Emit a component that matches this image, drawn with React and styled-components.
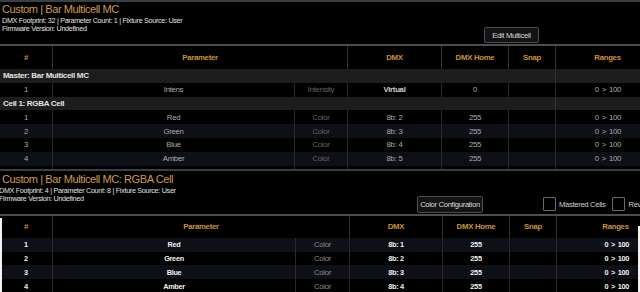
import React from "react";
import styled, { createGlobalStyle } from "styled-components";

const FONT = `"Liberation Sans", Arial, sans-serif`;

const GlobalStyle = createGlobalStyle`
  html, body { margin: 0; padding: 0; background: #000; }
  body { width: 640px; height: 292px; overflow: hidden; font-family: ${FONT}; }
  #root { width: 640px; height: 292px; overflow: hidden; }
`;

const Page = styled.div`
  width: 640px;
  height: 292px;
  overflow: hidden;
  background: #000;
  display: flex;
  flex-direction: column;
`;

const Panel = styled.section`
  position: relative;
  flex: none;
  width: ${(p) => p.$width}px;
  border-top: ${(p) => (p.$topRule ? "2px solid #3a3e46" : "0")};
  border-bottom: ${(p) => (p.$bottomRule ? "2px solid #3a3e46" : "0")};
`;

const Head = styled.header`
  display: flex;
  align-items: flex-end;
  height: ${(p) => p.$height}px;
  padding-top: ${(p) => p.$padTop}px;
  border-bottom: 2px solid #4a4e56;
`;

const InfoBlock = styled.div`
  flex: 0 0 ${(p) => p.$width}px;
  align-self: flex-start;
  padding-left: 2px;
  box-sizing: border-box;
  white-space: nowrap;
`;

const Title = styled.h1`
  margin: 0;
  font-size: 11.1px;
  letter-spacing: -0.45px;
  line-height: 15px;
  font-weight: normal;
  color: #cf9a4c;
`;

const InfoLine = styled.div`
  font-size: 7.2px;
  letter-spacing: -0.3px;
  line-height: 8px;
  color: #e0e0e0;
  margin-left: ${(p) => p.$shift || 0}px;
`;

const Controls = styled.div`
  display: flex;
  align-items: center;
  margin-bottom: 1px;
  white-space: nowrap;
`;

const Button = styled.button`
  box-sizing: border-box;
  width: ${(p) => p.$w}px;
  height: ${(p) => p.$h}px;
  padding: 0;
  background: #131313;
  border: 1px solid #4e4e4e;
  border-radius: 2px;
  color: #dcdcdc;
  font-family: ${FONT};
  font-size: 7.6px;
  letter-spacing: -0.3px;
  display: flex;
  align-items: center;
  justify-content: center;
`;

const Check = styled.span`
  box-sizing: border-box;
  width: 13px;
  height: 14px;
  margin-left: ${(p) => p.$gap}px;
  border: 1px solid #6a6a6a;
  border-radius: 1px;
  background: #000;
  flex: none;
`;

const CheckLabel = styled.span`
  margin-left: 3px;
  font-size: 7.6px;
  letter-spacing: -0.3px;
  color: #cfcfcf;
`;

const Table = styled.div`
  position: relative;
  &::before {
    content: "";
    position: absolute;
    display: ${(p) => (p.$focus ? "block" : "none")};
    left: 0;
    top: 2px;
    bottom: 0;
    width: 2px;
    background: #f2f2f2;
  }
  &::after {
    content: "";
    position: absolute;
    display: ${(p) => (p.$focus ? "block" : "none")};
    left: 638px;
    top: 10px;
    bottom: 0;
    width: 2px;
    background: #f2f2f2;
  }
`;

const Row = styled.div`
  display: grid;
  grid-template-columns: ${(p) => p.$cols};
  height: ${(p) => p.$h}px;
  background: ${(p) => p.$bg || "#000"};
`;

const HeadCell = styled.div`
  display: flex;
  align-items: center;
  justify-content: center;
  border-right: 1px solid #333;
  color: #c99334;
  font-weight: bold;
  font-size: 7.8px;
  letter-spacing: -0.3px;
  white-space: nowrap;
`;

const GroupCell = styled.div`
  display: flex;
  align-items: center;
  padding-left: 3px;
  border-right: 1px solid #303030;
  color: #e4e4e4;
  font-weight: bold;
  font-size: 8px;
  letter-spacing: -0.3px;
  white-space: nowrap;
`;

const Cell = styled.div`
  display: flex;
  align-items: center;
  justify-content: ${(p) => (p.$right ? "flex-end" : "center")};
  padding-right: ${(p) => p.$pr || 0}px;
  border-right: 1px solid #2a2a2a;
  font-size: ${(p) => (p.$strong ? 7.3 : 7.8)}px;
  letter-spacing: -0.3px;
  word-spacing: ${(p) => (p.$right ? 1 : 0)}px;
  font-weight: ${(p) => (p.$bold ? "bold" : "normal")};
  color: ${(p) => p.$color};
  white-space: nowrap;
  overflow: hidden;
`;

const TINT = "#0d1016";

const top = {
  width: 660,
  cols: "53px 242px 53px 94px 67px 47px 104px",
  headCols: "53px 295px 94px 67px 47px 104px",
  rangePad: 38,
};

const lower = {
  width: 675,
  cols: "53px 243px 54px 93px 67px 47px 118px",
  headCols: "53px 297px 93px 67px 47px 118px",
  rangePad: 45,
};

const topGroups = [
  {
    title: "Master: Bar Multicell MC",
    rows: [{ n: 1, name: "Intens", cat: "Intensity", dmx: "Virtual", home: "0", dmxBold: true }],
  },
  {
    title: "Cell 1: RGBA Cell",
    rows: [
      { n: 1, name: "Red", cat: "Color", dmx: "8b: 2", home: "255" },
      { n: 2, name: "Green", cat: "Color", dmx: "8b: 3", home: "255" },
      { n: 3, name: "Blue", cat: "Color", dmx: "8b: 4", home: "255" },
      { n: 4, name: "Amber", cat: "Color", dmx: "8b: 5", home: "255" },
    ],
  },
];

const lowerRows = [
  { n: 1, name: "Red", cat: "Color", dmx: "8b: 1", home: "255" },
  { n: 2, name: "Green", cat: "Color", dmx: "8b: 2", home: "255" },
  { n: 3, name: "Blue", cat: "Color", dmx: "8b: 3", home: "255" },
  { n: 4, name: "Amber", cat: "Color", dmx: "8b: 4", home: "255" },
];

function HeaderRow({ spec, h }) {
  return (
    <Row $cols={spec.headCols} $h={h}>
      <HeadCell>#</HeadCell>
      <HeadCell>Parameter</HeadCell>
      <HeadCell>DMX</HeadCell>
      <HeadCell>DMX Home</HeadCell>
      <HeadCell>Snap</HeadCell>
      <HeadCell>Ranges</HeadCell>
    </Row>
  );
}

function DataRow({ spec, row, bg, strong, h }) {
  const main = strong ? "#f0f0f0" : "#ababab";
  const cat = strong ? "#8a8a8a" : "#626262";
  return (
    <Row $cols={spec.cols} $h={h} $bg={bg}>
      <Cell $color={main} $bold={strong} $strong={strong}>{row.n}</Cell>
      <Cell $color={main} $bold={strong} $strong={strong}>{row.name}</Cell>
      <Cell $color={cat}>{row.cat}</Cell>
      <Cell $color={row.dmxBold ? "#cfcfcf" : main} $bold={strong || row.dmxBold} $strong={strong}>
        {row.dmx}
      </Cell>
      <Cell $color={main} $bold={strong} $strong={strong}>{row.home}</Cell>
      <Cell $color={main} />
      <Cell $color={main} $bold={strong} $strong={strong} $right $pr={spec.rangePad}>
        0 &gt; 100
      </Cell>
    </Row>
  );
}

function GroupRow({ title, h }) {
  return (
    <Row $cols="556px 1fr" $h={h} $bg="#1d1d1d">
      <GroupCell>{title}</GroupCell>
      <div />
    </Row>
  );
}

function EmptyRow({ spec, h }) {
  return (
    <Row $cols={spec.cols} $h={h}>
      {Array.from({ length: 7 }).map((_, i) => (
        <Cell key={i} $color="#000" />
      ))}
    </Row>
  );
}

export default function App() {
  return (
    <Page>
      <GlobalStyle />
      <Panel $width={top.width} $topRule $bottomRule>
        <Head $height={42} $padTop={0}>
          <InfoBlock $width={484}>
            <Title>Custom | Bar Multicell MC</Title>
            <InfoLine>DMX Footprint: 32 | Parameter Count: 1 | Fixture Source: User</InfoLine>
            <InfoLine>Firmware Version: Undefined</InfoLine>
          </InfoBlock>
          <Controls>
            <Button $w={55} $h={16}>Edit Multicell</Button>
          </Controls>
        </Head>
        <Table>
          <HeaderRow spec={top} h={23} />
          {topGroups.map((g) => (
            <React.Fragment key={g.title}>
              <GroupRow title={g.title} h={13.8} />
              {g.rows.map((r, i) => (
                <DataRow key={r.name} spec={top} row={r} h={13.8} bg={i % 2 ? TINT : "#000"} />
              ))}
            </React.Fragment>
          ))}
          <EmptyRow spec={top} h={3.4} />
        </Table>
      </Panel>

      <Panel $width={lower.width}>
        <Head $height={42} $padTop={1}>
          <InfoBlock $width={417}>
            <Title>Custom | Bar Multicell MC: RGBA Cell</Title>
            <InfoLine $shift={-3}>DMX Footprint: 4 | Parameter Count: 8 | Fixture Source: User</InfoLine>
            <InfoLine $shift={-3}>Firmware Version: Undefined</InfoLine>
          </InfoBlock>
          <Controls>
            <Button $w={66} $h={17}>Color Configuration</Button>
            <Check $gap={60} />
            <CheckLabel>Mastered Cells</CheckLabel>
            <Check $gap={7} />
            <CheckLabel>Reverse Cells</CheckLabel>
          </Controls>
        </Head>
        <Table $focus>
          <HeaderRow spec={lower} h={22} />
          {lowerRows.map((r, i) => (
            <DataRow key={r.name} spec={lower} row={r} h={13.75} strong bg={i % 2 ? "#000" : TINT} />
          ))}
        </Table>
      </Panel>
    </Page>
  );
}
